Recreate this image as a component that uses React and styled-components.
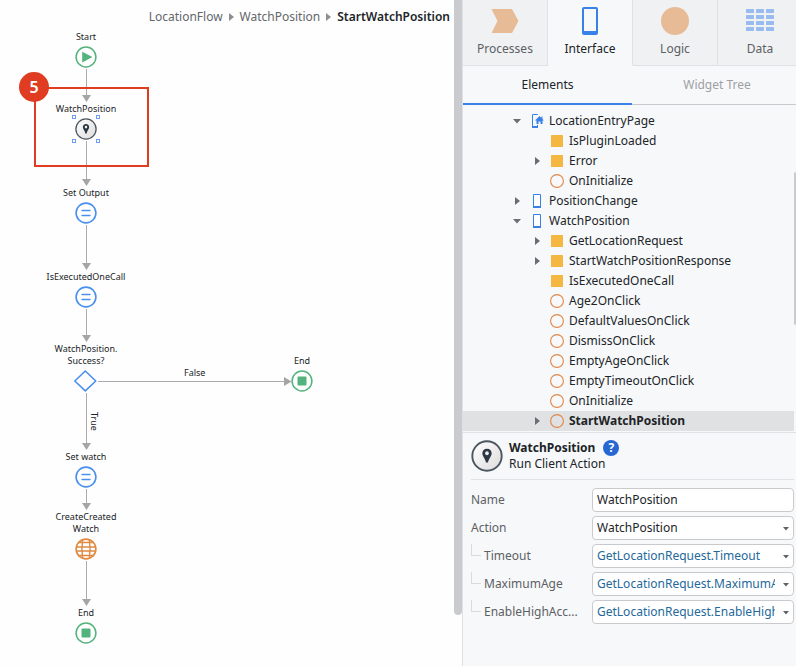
import React from "react";
import styled, { createGlobalStyle, css } from "styled-components";

const Global = createGlobalStyle`
  *, *::before, *::after { box-sizing: border-box; }
  body { margin: 0; background: #fefefe; }
  body, button, input, select {
    font-family: "Noto Sans", "Open Sans", sans-serif;
    font-size: 12px;
    line-height: 16px;
    color: #202427;
  }
  button { border: 0; padding: 0; background: none; cursor: pointer; }
`;

const Shell = styled.div`
  display: flex;
  min-height: 100vh;
  overflow: hidden;
`;

/* ---------- flow canvas ---------- */

const Canvas = styled.main`
  position: relative;
  flex: 1;
  min-width: 0;
`;

const Breadcrumb = styled.nav`
  display: flex;
  justify-content: flex-end;
  align-items: center;
  gap: 6px;
  padding: 9px 4px 0 0;
`;

const Crumb = styled.a`
  color: ${(p) => (p.$current ? "#202427" : "#63676a")};
  font-weight: ${(p) => (p.$current ? 600 : 400)};
  text-decoration: none;
`;

const Edges = styled.svg`
  position: absolute;
  top: 0;
  left: 0;
  overflow: visible;
`;

const Highlight = styled.div`
  position: absolute;
  left: 34px;
  top: 87px;
  width: 115px;
  height: 80px;
  border: 2px solid #df3c22;
`;

const StepBadge = styled.div`
  position: absolute;
  left: 19px;
  top: 72px;
  width: 30px;
  height: 30px;
  border-radius: 50%;
  background: #df3c22;
  color: #fff;
  font-size: 16px;
  font-weight: 600;
  line-height: 30px;
  text-align: center;
`;

const NodeBox = styled.div`
  position: absolute;
  left: ${(p) => p.$x}px;
  top: ${(p) => p.$y}px;
  width: 100px;
  margin-left: -50px;
  display: flex;
  flex-direction: column;
  align-items: center;
  gap: 3px;
`;

const NodeLabel = styled.div`
  font-size: 9px;
  line-height: 12px;
  text-align: center;
  white-space: pre-line;
`;

const NodeIcon = styled.svg`
  display: block;
  width: 22px;
  height: 22px;
  overflow: visible;
`;

const EdgeLabel = styled.div`
  position: absolute;
  left: ${(p) => p.$x}px;
  top: ${(p) => p.$y}px;
  font-size: 9px;
  line-height: 12px;
  ${(p) => p.$vertical && css`writing-mode: vertical-rl;`}
`;

const ScrollTrack = styled.div`
  flex: 0 0 8px;
`;

const ScrollThumb = styled.div`
  height: 615px;
  border-radius: 0 0 4px 4px;
  background: #cacbcf;
`;

/* ---------- side panel ---------- */

const Side = styled.aside`
  flex: 0 0 334px;
  min-width: 0;
  overflow: hidden;
  border-left: 1px solid #dfe1e4;
  background: #f7f8fa;
`;

const Tabs = styled.div`
  display: flex;
`;

const Tab = styled.button`
  flex: 0 0 85px;
  height: 66px;
  display: flex;
  flex-direction: column;
  align-items: center;
  gap: 5px;
  padding-top: 6px;
  border-right: 1px solid #dfe1e4;
  border-bottom: 1px solid ${(p) => (p.$active ? "#f7f8fa" : "#dfe1e4")};
  background: ${(p) => (p.$active ? "#f7f8fa" : "#f0f1f3")};
  color: ${(p) => (p.$active ? "#202427" : "#5c6063")};
`;

const TabIcon = styled.svg`
  display: block;
  width: 30px;
  height: 30px;
`;

const SubTabs = styled.div`
  display: flex;
`;

const SubTab = styled.button`
  flex: 0 0 ${(p) => (p.$active ? 169 : 170)}px;
  height: 39px;
  border-bottom: ${(p) => (p.$active ? "2px solid #3781e8" : "1px solid #c8cacd")};
  color: ${(p) => (p.$active ? "#202427" : "#9da0a3")};
`;

const TreeArea = styled.div`
  display: flex;
  border-bottom: 1px solid #dfe1e4;
`;

const Tree = styled.ul`
  flex: 1;
  min-width: 0;
  margin: 0;
  padding: 6px 0 1px;
  list-style: none;
`;

const TreeRow = styled.button`
  display: grid;
  grid-template-columns: 20px 20px 1fr;
  align-items: center;
  justify-items: center;
  width: 100%;
  height: 20px;
  padding-left: ${(p) => 44 + p.$level * 20}px;
  background: ${(p) => (p.$selected ? "#e0e1e3" : "transparent")};
  font-weight: ${(p) => (p.$selected ? 700 : 400)};
`;

const TreeText = styled.span`
  justify-self: start;
  padding-left: 2px;
`;

const Glyph = styled.svg`
  display: block;
`;

const TreeScroll = styled.div`
  flex: 0 0 2px;
  padding-top: 67px;
`;

const TreeThumb = styled.div`
  height: 153px;
  border-radius: 2px 0 0 2px;
  background: #cacbcf;
`;

const Props = styled.section`
  padding: 0 2px 0 8px;
`;

const PropsHead = styled.header`
  display: flex;
  align-items: center;
  gap: 6px;
  height: 47px;
  border-bottom: 1px solid #dfe1e4;
`;

const Title = styled.h2`
  display: flex;
  align-items: center;
  gap: 8px;
  margin: 0;
  font-size: 12px;
  line-height: 16px;
`;

const Subtitle = styled.p`
  margin: 0;
`;

const Help = styled.button`
  width: 16px;
  height: 16px;
  border-radius: 50%;
  background: #2767d4;
  color: #fff;
  font-size: 12px;
  font-weight: 700;
`;

const Form = styled.form`
  display: grid;
  gap: 4px;
  padding-top: 8px;
`;

const Field = styled.div`
  display: grid;
  grid-template-columns: 121px minmax(0, 1fr);
  align-items: center;
`;

const Label = styled.label`
  display: flex;
  align-items: center;
  gap: 3px;
  color: #5c6063;
  ${(p) =>
    p.$nested &&
    css`
      &::before {
        content: "";
        align-self: flex-start;
        width: 10px;
        height: 12px;
        margin-top: -4px;
        border: solid #d9dbdd;
        border-width: 0 0 1px 1px;
      }
    `}
`;

const control = css`
  display: block;
  width: 100%;
  height: 24px;
  border: 1px solid #c8cacd;
  border-radius: 4px;
  background: #fff;
  outline: none;
`;

const TextInput = styled.input`
  ${control}
  padding: 0 4px 1px;
`;

const SelectWrap = styled.div`
  position: relative;
`;

const Select = styled.select`
  ${control}
  appearance: none;
  padding: 0 18px 0 4px;
  color: ${(p) => (p.$expression ? "#24699a" : "#202427")};
`;

const Caret = styled.svg`
  position: absolute;
  right: 5px;
  top: 11px;
  pointer-events: none;
`;

/* ---------- drawings ---------- */

const Pin = () => (
  <>
    <defs>
      <linearGradient id="disc" x1="0" y1="0" x2="1" y2="1">
        <stop offset="0" stopColor="#ffffff" />
        <stop offset="1" stopColor="#dcdcdc" />
      </linearGradient>
    </defs>
    <circle cx="11" cy="11" r="10.1" fill="url(#disc)" stroke="#4b5660" strokeWidth="1.3" />
    <path
      fillRule="evenodd"
      fill="#2b3742"
      d="M11 6c-1.900 0-3.200 1.400-3.200 3.100 0 2.200 2.200 3.700 2.500 6.400h1.400c.3-2.700 2.500-4.200 2.500-6.400 0-1.700-1.300-3.100-3.200-3.100zm0 1.800a1.300 1.300 0 1 1 0 2.600 1.300 1.300 0 0 1 0-2.600z"
    />
  </>
);

const handles = [[-1, -1], [23, -1], [-1, 23], [23, 23]];

const nodeArt = {
  start: (
    <>
      <circle cx="11" cy="11" r="9.900" fill="#fff" stroke="#53b37c" strokeWidth="1.500" />
      <path d="M7.200 5.800v10.600L17.400 11.100z" fill="#53b37c" />
    </>
  ),
  end: (
    <>
      <circle cx="11" cy="11" r="9.900" fill="#fff" stroke="#53b37c" strokeWidth="1.500" />
      <rect x="6.500" y="6.500" width="9" height="9" rx="1" fill="#53b37c" />
    </>
  ),
  assign: (
    <>
      <circle cx="11" cy="11" r="9.900" fill="#fff" stroke="#4a90ee" strokeWidth="1.600" />
      <path d="M7 8.500h8M7 13.500h8" stroke="#4a90ee" strokeWidth="1.400" strokeLinecap="round" />
    </>
  ),
  decision: <path d="M10.300 1 20.800 11 10.300 20.800-.2 11z" fill="#fff" stroke="#4a90ee" strokeWidth="1.600" strokeLinejoin="round" />,
  server: (
    <>
      <circle cx="11" cy="11" r="9.900" fill="#fff" stroke="#e08a42" strokeWidth="1.600" />
      <path
        d="M7.600 2C6.700 8 6.700 14 7.600 20M14.400 2c.9 6 .9 12 0 18M3 4.500h16M1.300 9h19.400M1.300 13h19.400M3 17.500h16"
        fill="none"
        stroke="#e08a42"
        strokeWidth="1.400"
      />
    </>
  ),
  pin: (
    <>
      <Pin />
      {handles.map(([x, y]) => (
        <rect key={`${x},${y}`} x={x - 1.5} y={y - 1.5} width="3" height="3" fill="#fff" stroke="#6d9fee" strokeWidth="1" />
      ))}
    </>
  ),
};

const nodes = [
  { x: 86, y: 31, label: "Start", art: "start" },
  { x: 86, y: 103, label: "WatchPosition", art: "pin" },
  { x: 86, y: 187, label: "Set Output", art: "assign" },
  { x: 86, y: 271, label: "IsExecutedOneCall", art: "assign" },
  { x: 86, y: 343, label: "WatchPosition.\nSuccess?", art: "decision" },
  { x: 302, y: 355, label: "End", art: "end" },
  { x: 86, y: 451, label: "Set watch", art: "assign" },
  { x: 86, y: 511, label: "CreateCreated\nWatch", art: "server" },
  { x: 86, y: 607, label: "End", art: "end" },
];

const edges = [[69, 102], [141, 186], [225, 270], [309, 342], [393, 450], [489, 510], [561, 606]];

const tabs = [
  { name: "Processes", art: <path d="M1.500 3H22l6.500 12L22 27H1.500l6-12z" fill="#e7bb96" /> },
  {
    name: "Interface",
    active: true,
    art: (
      <>
        <rect x="8" y="2" width="14" height="26" rx="1" fill="none" stroke="#3781e8" strokeWidth="2" />
        <path d="M8 25h14v3H8z" fill="#3781e8" />
      </>
    ),
  },
  { name: "Logic", art: <circle cx="15" cy="15" r="14" fill="#e7bb96" /> },
  {
    name: "Data",
    art: [0, 1, 2].flatMap((c) =>
      [0, 1, 2, 3].map((r) => <rect key={`${c}${r}`} x={1 + c * 10} y={3 + r * 6} width="8" height="4" rx="0.5" fill="#98bbf0" />)
    ),
  },
];

const treeArt = {
  home: (
    <Glyph width="14" height="14" viewBox="0 0 14 14">
      <path d="M7.500 1V.5h-5v12h5V11" fill="none" stroke="#3781e8" />
      <path d="M2 12h6v2H2z" fill="#3781e8" />
      <path d="M9.500 2 5 6.500h1.500V10h2V7.500h2V10h2V6.500H14l-1.500-1.500V2.500h-1V4z" fill="#3781e8" />
    </Glyph>
  ),
  screen: (
    <Glyph width="8" height="14" viewBox="0 0 8 14">
      <path d="M.5.5h7v12.500h-7z" fill="#fff" stroke="#3781e8" />
      <path d="M0 12h8v2H0z" fill="#3781e8" />
    </Glyph>
  ),
  variable: (
    <Glyph width="12" height="12" viewBox="0 0 12 12">
      <rect width="12" height="12" rx="0.5" fill="#f4b742" />
    </Glyph>
  ),
  action: (
    <Glyph width="14" height="14" viewBox="0 0 14 14">
      <circle cx="7" cy="7" r="6.400" fill="none" stroke="#de8748" strokeWidth="1.100" />
    </Glyph>
  ),
};

const rows = [
  ["LocationEntryPage", 0, "home", "open"],
  ["IsPluginLoaded", 1, "variable"],
  ["Error", 1, "variable", "closed"],
  ["OnInitialize", 1, "action"],
  ["PositionChange", 0, "screen", "closed"],
  ["WatchPosition", 0, "screen", "open"],
  ["GetLocationRequest", 1, "variable", "closed"],
  ["StartWatchPositionResponse", 1, "variable", "closed"],
  ["IsExecutedOneCall", 1, "variable"],
  ["Age2OnClick", 1, "action"],
  ["DefaultValuesOnClick", 1, "action"],
  ["DismissOnClick", 1, "action"],
  ["EmptyAgeOnClick", 1, "action"],
  ["EmptyTimeoutOnClick", 1, "action"],
  ["OnInitialize", 1, "action"],
  ["StartWatchPosition", 1, "action", "closed", true],
];

const fields = [
  { id: "action", label: "Action", value: "WatchPosition" },
  { id: "timeout", label: "Timeout", value: "GetLocationRequest.Timeout", nested: true },
  { id: "maxage", label: "MaximumAge", value: "GetLocationRequest.MaximumAge", nested: true },
  { id: "accuracy", label: "EnableHighAcc...", value: "GetLocationRequest.EnableHighAccuracy", nested: true },
];

const CrumbArrow = () => (
  <Glyph width="5" height="8" viewBox="0 0 5 8">
    <path d="M0 0v8l5-4z" fill="#8c8f92" />
  </Glyph>
);

const Disclosure = ({ state }) => (
  <Glyph width="8" height="8" viewBox="0 0 8 8">
    {state === "open" && <path d="M0 2h8L4 6.500z" fill="#6b6e71" />}
    {state === "closed" && <path d="M2 0v8l5-4z" fill="#6b6e71" />}
  </Glyph>
);

function Flow() {
  return (
    <Canvas>
      <Breadcrumb aria-label="Breadcrumb">
        <Crumb href="#flow">LocationFlow</Crumb>
        <CrumbArrow />
        <Crumb href="#screen">WatchPosition</Crumb>
        <CrumbArrow />
        <Crumb href="#action" $current aria-current="page">StartWatchPosition</Crumb>
      </Breadcrumb>
      <Edges width="320" height="610" aria-hidden="true">
        {edges.map(([from, to]) => (
          <g key={from}>
            <path d={`M86.5 ${from}V${to - 6}`} stroke="#aaacae" />
            <path d={`M82 ${to - 7}h9l-4.500 7z`} fill="#a3a5a7" />
          </g>
        ))}
        <path d="M98 381.500H286" stroke="#aaacae" />
        <path d="M284 377v9l7.500-4.500z" fill="#a3a5a7" />
      </Edges>
      {nodes.map((n) => (
        <NodeBox key={n.y} $x={n.x} $y={n.y}>
          <NodeLabel>{n.label}</NodeLabel>
          <NodeIcon viewBox="0 0 22 22">{nodeArt[n.art]}</NodeIcon>
        </NodeBox>
      ))}
      <EdgeLabel $x={184} $y={367}>False</EdgeLabel>
      <EdgeLabel $x={88} $y={412} $vertical>True</EdgeLabel>
      <Highlight />
      <StepBadge>5</StepBadge>
    </Canvas>
  );
}

function Properties() {
  return (
    <Props>
      <PropsHead>
        <Glyph width="32" height="32" viewBox="0 0 22 22"><Pin /></Glyph>
        <div>
          <Title>WatchPosition <Help type="button" aria-label="Help">?</Help></Title>
          <Subtitle>Run Client Action</Subtitle>
        </div>
      </PropsHead>
      <Form>
        <Field>
          <Label htmlFor="name">Name</Label>
          <TextInput id="name" defaultValue="WatchPosition" />
        </Field>
        {fields.map((f) => (
          <Field key={f.id}>
            <Label htmlFor={f.id} $nested={f.nested}>{f.label}</Label>
            <SelectWrap>
              <Select id={f.id} $expression={f.nested}>
                <option>{f.value}</option>
              </Select>
              <Caret width="6" height="4" viewBox="0 0 6 4" aria-hidden="true">
                <path d="M0 0h6L3 3.500z" fill="#606467" />
              </Caret>
            </SelectWrap>
          </Field>
        ))}
      </Form>
    </Props>
  );
}

export default function App() {
  return (
    <Shell>
      <Global />
      <Flow />
      <ScrollTrack><ScrollThumb /></ScrollTrack>
      <Side>
        <Tabs role="tablist">
          {tabs.map((t) => (
            <Tab key={t.name} role="tab" aria-selected={!!t.active} $active={t.active}>
              <TabIcon viewBox="0 0 30 30">{t.art}</TabIcon>
              {t.name}
            </Tab>
          ))}
        </Tabs>
        <SubTabs role="tablist">
          <SubTab role="tab" aria-selected="true" $active>Elements</SubTab>
          <SubTab role="tab" aria-selected="false">Widget Tree</SubTab>
        </SubTabs>
        <TreeArea>
          <Tree>
            {rows.map(([name, level, icon, state, selected], i) => (
              <li key={i}>
                <TreeRow $level={level} $selected={selected} aria-expanded={state ? state === "open" : undefined}>
                  <Disclosure state={state} />
                  {treeArt[icon]}
                  <TreeText>{name}</TreeText>
                </TreeRow>
              </li>
            ))}
          </Tree>
          <TreeScroll><TreeThumb /></TreeScroll>
        </TreeArea>
        <Properties />
      </Side>
    </Shell>
  );
}
